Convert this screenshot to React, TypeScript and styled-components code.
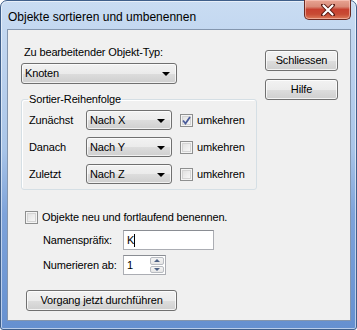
import React from "react";
import styled, { createGlobalStyle } from "styled-components";

const GlobalStyle = createGlobalStyle`
  html, body { margin: 0; padding: 0; background: #ffffff; }
  body { width: 357px; height: 330px; overflow: hidden; }
  * { box-sizing: border-box; }
`;

const Window = styled.div`
  width: 357px;
  height: 330px;
  border: 1px solid #3f5f8a;
  border-radius: 7px 7px 3px 3px;
  background: linear-gradient(
    180deg,
    #c9dcf2 0%,
    #bcd2ee 20%,
    #a9c5e8 45%,
    #7ea3da 65%,
    #6590d0 100%
  );
  box-shadow: inset 0 0 0 1px rgba(255, 255, 255, 0.55);
  display: flex;
  flex-direction: column;
  padding: 0 5px 8px 6px;
  font-family: "Liberation Sans", Arial, sans-serif;
`;

const TitleBar = styled.div`
  height: 28px;
  display: flex;
  align-items: flex-start;
  justify-content: space-between;
`;

const TitleText = styled.span`
  margin: 9px 0 0 1px;
  font-family: "Liberation Sans", Arial, sans-serif;
  font-size: 12px;
  line-height: 14px;
  color: #000;
`;

const CloseButton = styled.div`
  width: 47px;
  height: 20px;
  margin-top: -1px;
  border: 1px solid #6b2a22;
  border-top: none;
  border-radius: 0 0 5px 5px;
  background: linear-gradient(
    180deg,
    #e8a493 0%,
    #d98a78 35%,
    #c7402f 50%,
    #c84b34 75%,
    #dc7b5a 100%
  );
  box-shadow: inset 0 0 0 1px rgba(255, 210, 200, 0.55);
  display: flex;
  align-items: center;
  justify-content: center;
`;

const Client = styled.div`
  flex: 1;
  border: 1px solid #8496ae;
  background: #f0f0f0;
  display: grid;
  grid-template-columns: 1fr auto;
  font-size: 11px;
  letter-spacing: -0.15px;
  color: #000;
`;

const MainColumn = styled.div`
  display: flex;
  flex-direction: column;
  align-items: flex-start;
  padding-left: 13px;
`;

const SideColumn = styled.div`
  display: flex;
  flex-direction: column;
  gap: 8px;
  padding: 20px 12px 0 0;
`;

const Caption = styled.div<{ $top?: number; $left?: number }>`
  margin-top: ${(p) => p.$top ?? 0}px;
  margin-left: ${(p) => p.$left ?? 0}px;
  line-height: 13px;
  white-space: nowrap;
`;

const Combo = styled.div<{ $width: number; $height?: number; $top?: number }>`
  width: ${(p) => p.$width}px;
  height: ${(p) => p.$height ?? 21}px;
  margin-top: ${(p) => p.$top ?? 0}px;
  border: 1px solid #707070;
  border-radius: 3px;
  background: linear-gradient(180deg, #f2f2f2 0%, #ebebeb 50%, #dddddd 51%, #cfcfcf 100%);
  box-shadow: inset 0 0 0 1px rgba(255, 255, 255, 0.7);
  display: flex;
  align-items: center;
  justify-content: space-between;
  padding: 0 6px 0 3px;
  flex-shrink: 0;
`;

const ComboText = styled.span`
  line-height: 13px;
`;

const Arrow = styled.span`
  width: 0;
  height: 0;
  border-left: 4px solid transparent;
  border-right: 4px solid transparent;
  border-top: 4px solid #000;
  margin-top: 1px;
`;

const Group = styled.fieldset`
  margin: 9px 0 0 0;
  width: 236px;
  border: 1px solid #d5dfe5;
  border-radius: 3px;
  padding: 4px 4px 5px 7px;
  display: flex;
  flex-direction: column;
  gap: 7px;
  box-shadow: inset 1px 1px 0 #ffffff;
`;

const Legend = styled.legend`
  padding: 0 1px;
  margin-left: -1px;
  line-height: 13px;
  height: 13px;
  font-size: 11px;
`;

const SortRow = styled.div`
  display: flex;
  align-items: center;
  height: 20px;
`;

const RowLabel = styled.span<{ $width: number }>`
  width: ${(p) => p.$width}px;
  flex-shrink: 0;
  line-height: 13px;
`;

const CheckLine = styled.label<{ $gapBefore?: number; $left?: number; $top?: number }>`
  display: flex;
  align-items: center;
  gap: 4px;
  margin-left: ${(p) => (p.$gapBefore ?? 0) + (p.$left ?? 0)}px;
  margin-top: ${(p) => p.$top ?? 0}px;
  line-height: 13px;
  white-space: nowrap;
`;

const Box = styled.span`
  width: 13px;
  height: 13px;
  border: 1px solid #8e8f8f;
  background: linear-gradient(135deg, #dcdcdc 0%, #f0f0f0 60%, #fcfcfc 100%);
  box-shadow: inset 0 0 0 1px #f4f4f4, inset 0 0 0 2px #d4d4d4;
  display: flex;
  align-items: center;
  justify-content: center;
  flex-shrink: 0;
`;

const FieldRow = styled.div<{ $top: number }>`
  display: flex;
  align-items: center;
  margin: ${(p) => p.$top}px 0 0 22px;
`;

const TextBox = styled.div<{ $width: number }>`
  width: ${(p) => p.$width}px;
  height: 20px;
  border: 1px solid #abadb3;
  border-top-color: #8a8d93;
  background: #fff;
  display: flex;
  align-items: center;
  padding-left: 3px;
  line-height: 13px;
`;

const Caret = styled.span`
  width: 1px;
  height: 13px;
  background: #000;
`;

const Spinner = styled.div`
  width: 43px;
  height: 20px;
  border: 1px solid #abadb3;
  border-top-color: #8a8d93;
  background: #fff;
  display: flex;
  align-items: stretch;
`;

const SpinnerValue = styled.span`
  flex: 1;
  padding-left: 3px;
  display: flex;
  align-items: center;
`;

const SpinButtons = styled.div`
  width: 15px;
  display: flex;
  flex-direction: column;
  gap: 1px;
  padding: 1px 1px 1px 0;
`;

const SpinButton = styled.div`
  flex: 1;
  border: 1px solid #b9bcc2;
  border-radius: 2px;
  background: linear-gradient(180deg, #f4f4f4 0%, #e6e6e6 100%);
  display: flex;
  align-items: center;
  justify-content: center;
`;

const SmallTri = styled.span<{ $up?: boolean }>`
  width: 0;
  height: 0;
  border-left: 3px solid transparent;
  border-right: 3px solid transparent;
  ${(p) => (p.$up ? "border-bottom: 3px solid #4d6185;" : "border-top: 3px solid #4d6185;")}
`;

const PushButton = styled.button<{ $width: number; $top?: number; $left?: number }>`
  width: ${(p) => p.$width}px;
  height: 21px;
  margin: ${(p) => p.$top ?? 0}px 0 0 ${(p) => p.$left ?? 0}px;
  border: 1px solid #707070;
  border-radius: 3px;
  background: linear-gradient(180deg, #f2f2f2 0%, #ebebeb 50%, #dddddd 51%, #cfcfcf 100%);
  box-shadow: inset 0 0 0 1px rgba(255, 255, 255, 0.75);
  font-family: "Liberation Sans", Arial, sans-serif;
  font-size: 11px;
  letter-spacing: -0.15px;
  color: #000;
  padding: 0;
  line-height: 13px;
`;

const CheckMark = () => (
  <svg width="9" height="9" viewBox="0 0 9 9">
    <path d="M1 4.5 L3.5 7.5 L8 1" fill="none" stroke="#4a5c9a" strokeWidth="1.8" />
  </svg>
);

const sortRows = [
  { label: "Zunächst", value: "Nach X", checked: true },
  { label: "Danach", value: "Nach Y", checked: false },
  { label: "Zuletzt", value: "Nach Z", checked: false },
];

export default function App() {
  return (
    <>
      <GlobalStyle />
      <Window>
        <TitleBar>
          <TitleText>Objekte sortieren und umbenennen</TitleText>
          <CloseButton>
            <svg width="14" height="12" viewBox="0 0 14 12">
              <path
                d="M2 1 L12 11 M12 1 L2 11"
                stroke="#5a1a12"
                strokeWidth="4"
                strokeLinecap="round"
              />
              <path
                d="M2.5 1.5 L11.5 10.5 M11.5 1.5 L2.5 10.5"
                stroke="#ffffff"
                strokeWidth="2.2"
                strokeLinecap="round"
              />
            </svg>
          </CloseButton>
        </TitleBar>
        <Client>
          <MainColumn>
            <Caption $top={16} $left={3}>Zu bearbeitender Objekt-Typ:</Caption>
            <Combo $width={156} $top={4}>
              <ComboText>Knoten</ComboText>
              <Arrow />
            </Combo>
            <Group>
              <Legend>Sortier-Reihenfolge</Legend>
              {sortRows.map((r) => (
                <SortRow key={r.label}>
                  <RowLabel $width={57}>{r.label}</RowLabel>
                  <Combo $width={86} $height={20}>
                    <ComboText>{r.value}</ComboText>
                    <Arrow />
                  </Combo>
                  <CheckLine $gapBefore={8}>
                    <Box>{r.checked && <CheckMark />}</Box>
                    umkehren
                  </CheckLine>
                </SortRow>
              ))}
            </Group>
            <CheckLine $left={4} $top={21}>
              <Box />
              Objekte neu und fortlaufend benennen.
            </CheckLine>
            <FieldRow $top={6}>
              <RowLabel $width={80}>Namenspräfix:</RowLabel>
              <TextBox $width={91}>
                K
                <Caret />
              </TextBox>
            </FieldRow>
            <FieldRow $top={5}>
              <RowLabel $width={80}>Numerieren ab:</RowLabel>
              <Spinner>
                <SpinnerValue>1</SpinnerValue>
                <SpinButtons>
                  <SpinButton>
                    <SmallTri $up />
                  </SpinButton>
                  <SpinButton>
                    <SmallTri />
                  </SpinButton>
                </SpinButtons>
              </Spinner>
            </FieldRow>
            <PushButton $width={151} $top={15} $left={5}>
              Vorgang jetzt durchführen
            </PushButton>
          </MainColumn>
          <SideColumn>
            <PushButton $width={73}>Schliessen</PushButton>
            <PushButton $width={73}>Hilfe</PushButton>
          </SideColumn>
        </Client>
      </Window>
    </>
  );
}
